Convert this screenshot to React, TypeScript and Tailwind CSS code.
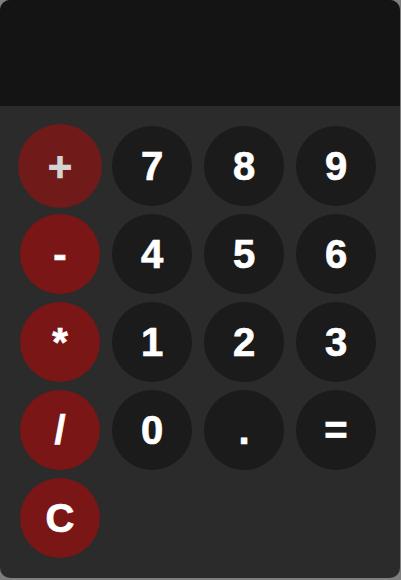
import React from 'react';

const keys = [
  ['+', '7', '8', '9'],
  ['-', '4', '5', '6'],
  ['*', '1', '2', '3'],
  ['/', '0', '.', '='],
  ['C'],
];

const operators = ['+', '-', '*', '/', 'C'];

export default function App() {
  return (
    <div className="min-h-screen bg-[#7f7f7f]">
      <div
        className="w-[400px] h-[578px] rounded-[10px] overflow-hidden bg-[#2b2b2b] flex flex-col"
        style={{ fontFamily: '"Liberation Sans", Arial, sans-serif' }}
      >
        {/* display */}
        <div className="h-[106px] bg-[#141414]" />

        {/* keypad */}
        <div className="grid grid-cols-[repeat(4,80px)] gap-x-3 gap-y-2 px-5 pt-5">
          {keys.flat().map((k) => {
            const isOp = operators.includes(k);
            const hovered = k === '+';
            return (
              <button
                key={k}
                className={`w-20 h-20 rounded-full flex items-center justify-center text-[40px] font-bold leading-none [-webkit-text-stroke:0.7px_currentColor]
                  ${isOp ? 'bg-[#7a1616]' : 'bg-[#1b1b1b]'}
                  ${hovered ? 'scale-105 bg-[#701a1a] text-[#d4d4d4]' : 'text-white'}
                `}
              >
                {k}
              </button>
            );
          })}
        </div>
      </div>
    </div>
  );
}
